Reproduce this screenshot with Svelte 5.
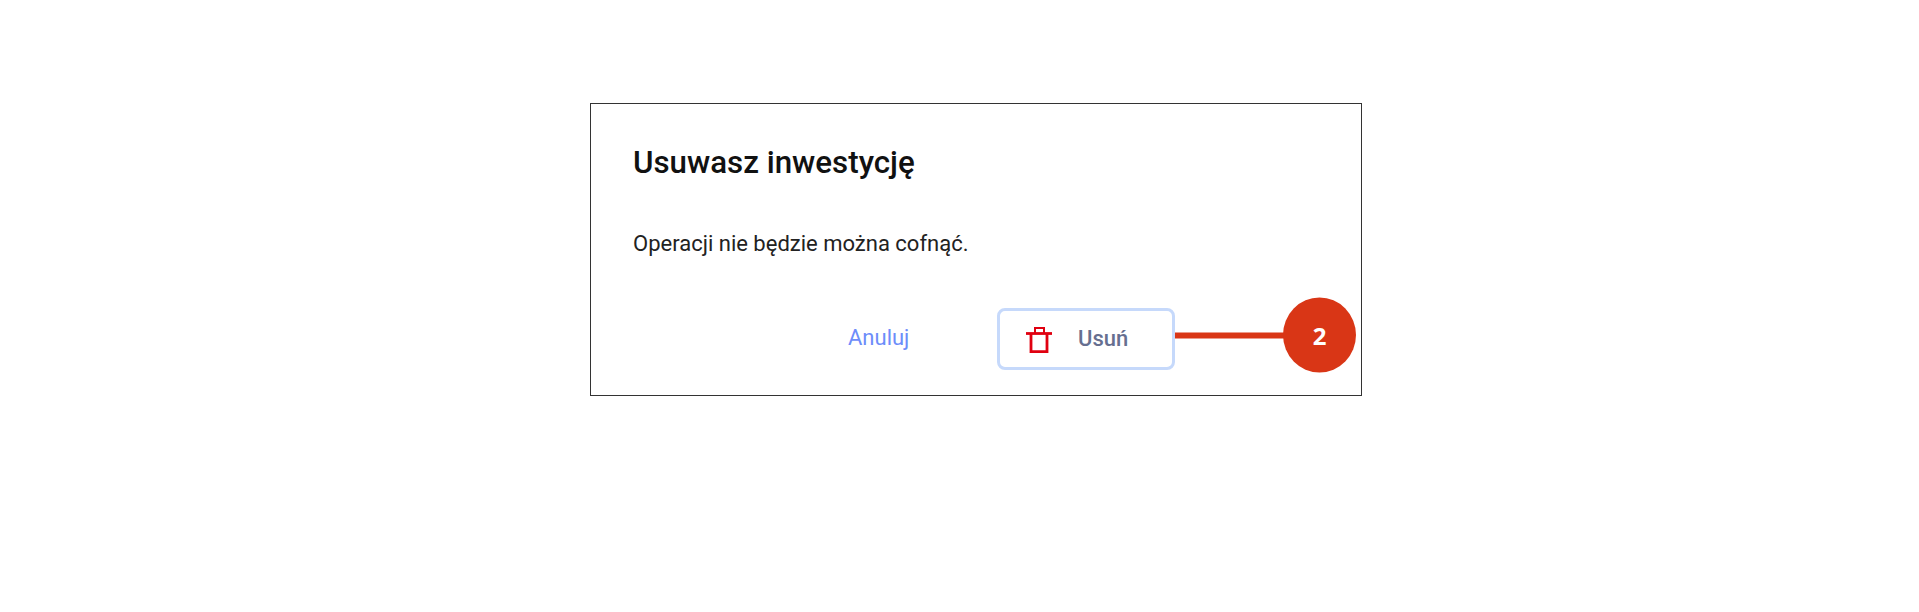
<script lang="ts">
  const title = 'Usuwasz inwestycję';
  const message = 'Operacji nie będzie można cofnąć.';
</script>

<div class="page">
  <section class="dialog">
    <h2>{title}</h2>
    <p>{message}</p>
    <div class="actions">
      <button class="cancel">Anuluj</button>
      <button class="remove">
        <svg width="26" height="26" viewBox="0 0 26 26" fill="none" stroke="#e00010" stroke-width="2.8">
          <path d="M0 6.5H26" />
          <path d="M9 6V1H18V6" stroke-width="2" />
          <path d="M5 6.5V24.6H21V6.5" />
        </svg>
        <span>Usuń</span>
        <div class="callout">
          <i class="line"></i>
          <b class="badge">2</b>
        </div>
      </button>
    </div>
  </section>
</div>

<style>
  :global(body) {
    background: #fff;
  }
  .page {
    height: 612px;
    box-sizing: border-box;
    padding: 103px 0 0 590px;
    font-family: Roboto, sans-serif;
  }
  .dialog {
    width: 772px;
    height: 293px;
    box-sizing: border-box;
    border: 1px solid #333;
    padding: 41px 0 0 42px;
  }
  h2 {
    margin: 0;
    font-size: 31.3px;
    line-height: 36px;
    font-weight: 500;
    color: #111;
  }
  p {
    margin: 49px 0 0;
    font-size: 22px;
    line-height: 28px;
    color: #222;
  }
  .actions {
    display: flex;
    align-items: center;
    margin-top: 50px;
    padding-left: 215px;
  }
  button {
    font-family: inherit;
    background: none;
    border: none;
    padding: 0;
  }
  .cancel {
    width: 149px;
    margin-bottom: 4px;
    text-align: left;
    font-size: 22px;
    color: #6d8dfa;
  }
  .remove {
    position: relative;
    display: flex;
    align-items: center;
    width: 178px;
    height: 62px;
    box-sizing: border-box;
    border: 3px solid #c6d9fb;
    border-radius: 8px;
    padding-left: 26px;
    font-size: 22px;
    font-weight: 500;
    color: #666f90;
  }
  .remove svg {
    margin-top: 2px;
  }
  .remove span {
    margin: 0 0 2px 26px;
  }
  .callout {
    position: absolute;
    left: 175px;
    top: calc(50% - 4px);
    display: flex;
    align-items: center;
    transform: translateY(-50%);
  }
  .line {
    width: 110px;
    height: 6px;
    background: #d93616;
  }
  .badge {
    display: grid;
    place-items: center;
    width: 73px;
    height: 75px;
    margin-left: -2px;
    border-radius: 50%;
    background: #d93616;
    color: #fff;
    font-family: "Open Sans", sans-serif;
    font-size: 24px;
    font-weight: 700;
  }
</style>
